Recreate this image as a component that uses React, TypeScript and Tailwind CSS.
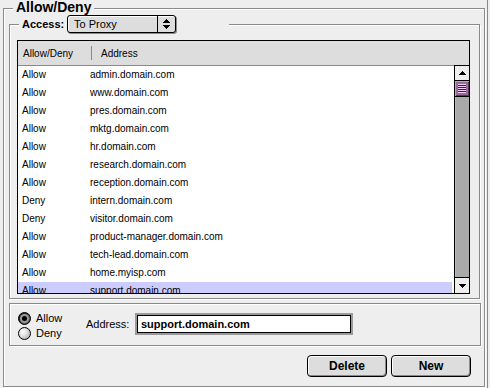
import React from "react";

const rows: [string, string][] = [
  ["Allow", "admin.domain.com"],
  ["Allow", "www.domain.com"],
  ["Allow", "pres.domain.com"],
  ["Allow", "mktg.domain.com"],
  ["Allow", "hr.domain.com"],
  ["Allow", "research.domain.com"],
  ["Allow", "reception.domain.com"],
  ["Deny", "intern.domain.com"],
  ["Deny", "visitor.domain.com"],
  ["Allow", "product-manager.domain.com"],
  ["Allow", "tech-lead.domain.com"],
  ["Allow", "home.myisp.com"],
  ["Allow", "support.domain.com"],
];

const etched = "border border-[#8a8a8a] shadow-[inset_1px_1px_0_#ffffff,1px_1px_0_#ffffff]";

function UpTri() {
  return (
    <svg width="7" height="4" viewBox="0 0 7 4" shapeRendering="crispEdges">
      <path d="M3 0h1v1h1v1h1v1h1v1H0V3h1V2h1V1h1z" fill="#000" />
    </svg>
  );
}
function DownTri() {
  return (
    <svg width="7" height="4" viewBox="0 0 7 4" shapeRendering="crispEdges">
      <path d="M0 0h7v1H6v1H5v1H4v1H3V3H2V2H1V1H0z" fill="#000" />
    </svg>
  );
}

function Radio({ on }: { on: boolean }) {
  return on ? (
    <div className="w-[13px] h-[13px] rounded-full border border-black bg-[#555] flex items-center justify-center shadow-[inset_1px_1px_0_#222]">
      <div className="w-[9px] h-[9px] rounded-full bg-[#999] flex items-center justify-center">
        <div className="w-[5px] h-[5px] rounded-full bg-black" />
      </div>
    </div>
  ) : (
    <div className="w-[13px] h-[13px] rounded-full border border-black bg-[radial-gradient(circle_at_35%_35%,#ffffff_0%,#e6e6e6_35%,#a0a0a0_100%)]" />
  );
}

export default function App() {
  return (
    <div className="w-[490px] h-[388px] bg-[#eeeeee] flex overflow-hidden text-black font-['Liberation_Sans',Arial,sans-serif]">
      <div className="w-[487px] pl-[3px] pt-[8px]">
        <div className={`relative w-[482px] h-[379px] ${etched} pl-[5px] pt-[15px]`}>
          <span className="absolute left-[9px] top-[-9px] bg-[#eeeeee] px-[3px] text-[14px] leading-[15px] font-bold">
            Allow/Deny
          </span>

          {/* Access group */}
          <div className={`relative w-[471px] h-[275px] ${etched} pl-[7px] pt-[15px]`}>
            <div className="absolute left-[9px] top-[-10px] w-[210px] bg-[#eeeeee] pl-[3px] flex items-center">
              <span className="w-[45px] text-[11px] font-bold leading-[12px]">Access:</span>
              <div className="w-[109px] h-[18px] rounded-[3px] border border-black bg-[#dddddd] shadow-[1px_1px_0_#8a8a8a,inset_1px_1px_0_#ffffff] flex">
                <div className="flex-1 pl-[6px] text-[11px] leading-[16px]">To Proxy</div>
                <div className="w-[18px] border-l border-black flex flex-col items-center justify-center gap-[2px]">
                  <UpTri />
                  <DownTri />
                </div>
              </div>
            </div>

            {/* List */}
            <div className="w-[453px] h-[254px] border border-black bg-white flex flex-col">
              <div className="h-[25px] shrink-0 bg-[#dddddd] border-b border-[#8a8a8a] flex items-center pl-[5px] text-[10px]">
                <span className="w-[68px]">Allow/Deny</span>
                <span className="w-px h-[14px] bg-[#8a8a8a]" />
                <span className="pl-[9px]">Address</span>
              </div>
              <div className="flex-1 flex min-h-0">
                <div className="flex-1 overflow-hidden">
                  {rows.map(([a, b], i) => (
                    <div
                      key={i}
                      className={`h-[18px] flex items-center pl-[4px] text-[10px] leading-[18px] ${
                        i === rows.length - 1 ? "bg-[#ccccff] mr-[2px]" : ""
                      }`}
                    >
                      <span className="w-[68px]">{a}</span>
                      <span>{b}</span>
                    </div>
                  ))}
                </div>
                <div className="w-[15px] -mt-px border-l border-t border-black flex flex-col">
                  <div className="h-[14px] bg-[#eeeeee] flex items-center justify-center">
                    <UpTri />
                  </div>
                  <div className="h-[17px] border-y border-black bg-[#9b6b9b] flex items-center justify-center shadow-[inset_1px_1px_0_#c89ac8,inset_-1px_-1px_0_#5a3a5a]">
                    <svg width="8" height="9" viewBox="0 0 8 9" shapeRendering="crispEdges">
                      {[0, 2, 4, 6, 8].map((y) => (
                        <rect key={y} x="0" y={y} width="8" height="1" fill="#f0d0f0" />
                      ))}
                      {[1, 3, 5, 7].map((y) => (
                        <rect key={y} x="0" y={y} width="8" height="1" fill="#3a1f3a" />
                      ))}
                    </svg>
                  </div>
                  <div className="flex-1 bg-[#aaaaaa] shadow-[inset_1px_0_0_#bbbbbb]" />
                  <div className="h-[16px] border-t border-black bg-[#eeeeee] flex items-center justify-center">
                    <DownTri />
                  </div>
                </div>
              </div>
            </div>
          </div>

          {/* Lower box */}
          <div className={`mt-[4px] w-[472px] h-[43px] ${etched} pl-[8px] pt-[7px] flex items-start`}>
            <div className="w-[68px] flex flex-col text-[11px]">
              <label className="h-[15px] flex items-center gap-[5px]">
                <Radio on />
                <span>Allow</span>
              </label>
              <label className="h-[15px] flex items-center gap-[5px]">
                <Radio on={false} />
                <span>Deny</span>
              </label>
            </div>
            <div className="flex items-center mt-[2px]">
              <span className="w-[49px] text-[11px]">Address:</span>
              <div className="w-[218px] h-[22px] border-2 border-[#9a9a9a]">
                <div className="w-full h-full border border-black bg-white pl-[3px] text-[11px] font-bold leading-[16px]">
                  support.domain.com
                </div>
              </div>
            </div>
          </div>

          {/* Buttons */}
          <div className="mt-[9px] flex justify-end gap-[4px] pr-[13px]">
            <button className="w-[80px] h-[22px] rounded-[4px] border border-black bg-[#dddddd] shadow-[inset_1px_1px_0_#ffffff,inset_-1px_-1px_0_#8a8a8a] text-[12px] font-bold leading-[20px]">
              Delete
            </button>
            <button className="w-[80px] h-[22px] rounded-[4px] border border-black bg-[#dddddd] shadow-[inset_1px_1px_0_#ffffff,inset_-1px_-1px_0_#8a8a8a] text-[12px] font-bold leading-[20px]">
              New
            </button>
          </div>
        </div>
      </div>
      <div className="w-px h-full bg-[#8a8a8a]" />
    </div>
  );
}
